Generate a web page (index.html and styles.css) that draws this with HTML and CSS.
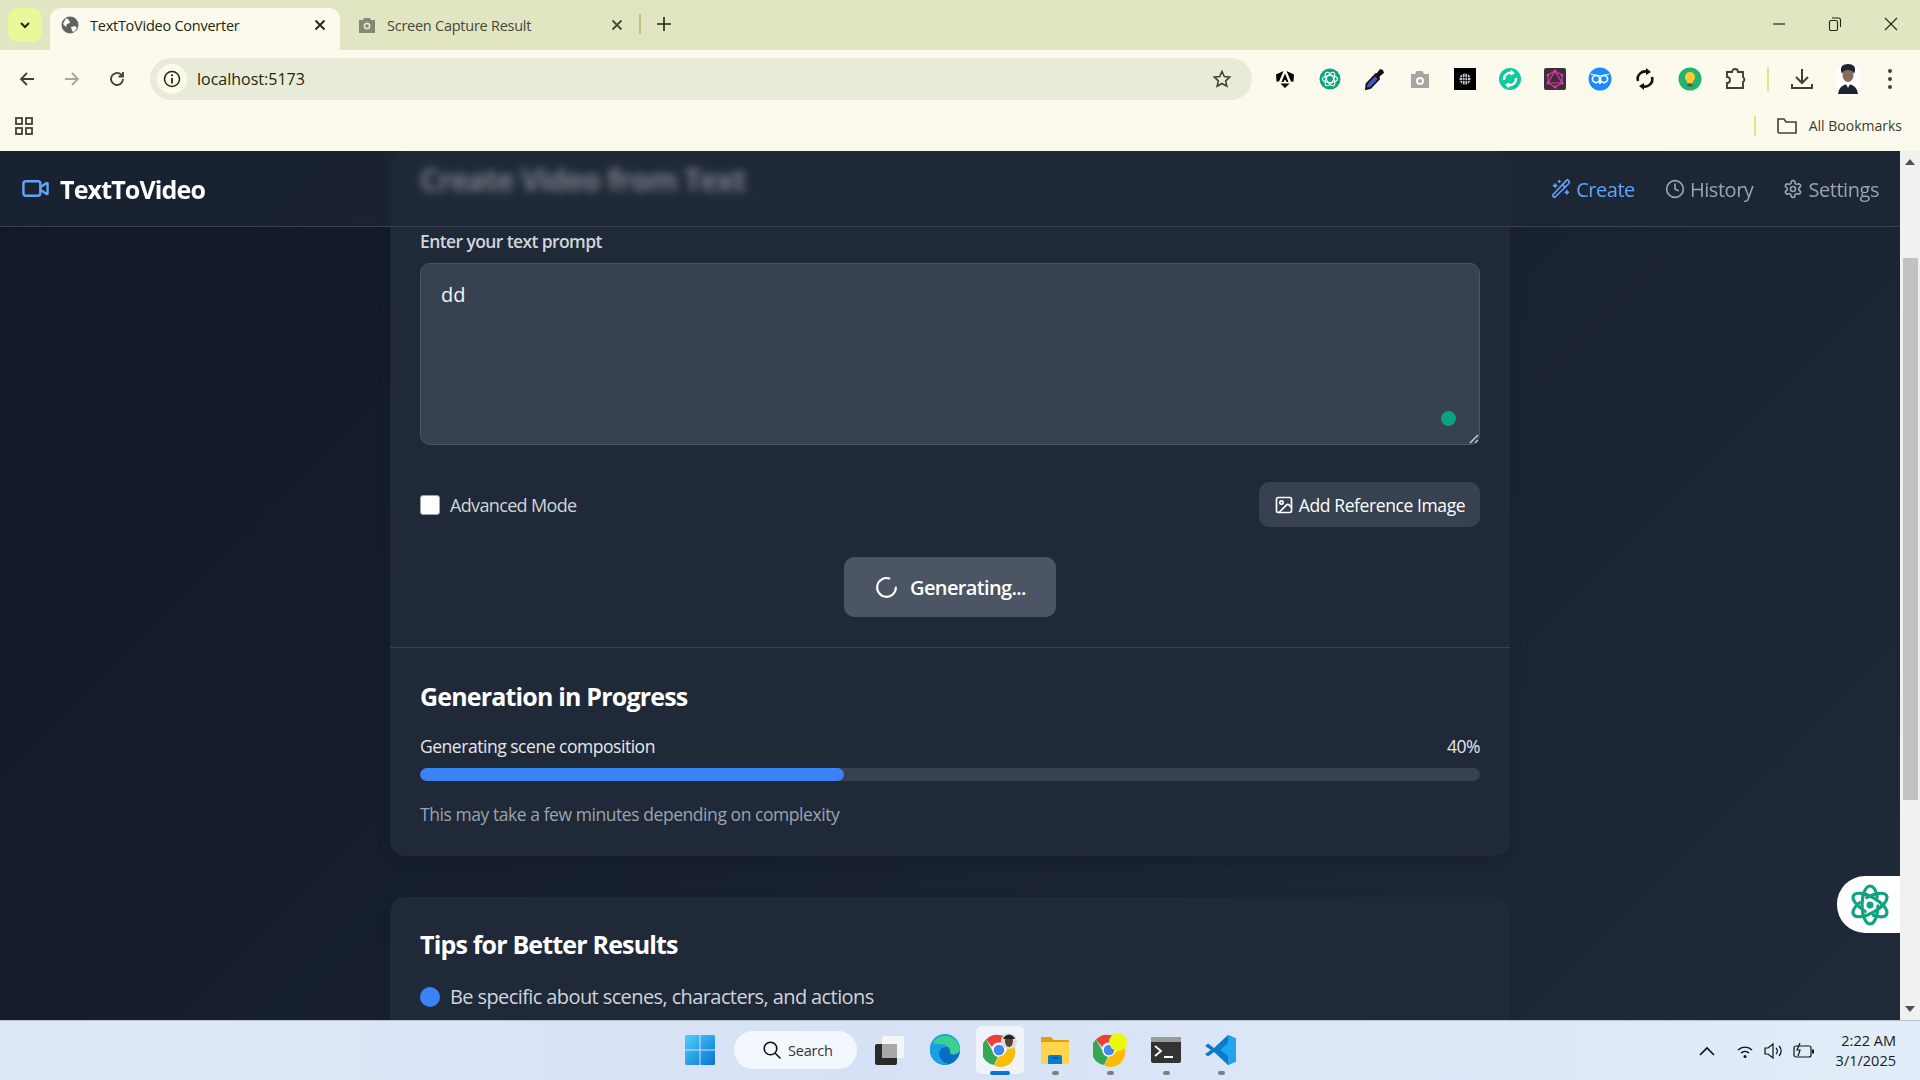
FILE: index.html
```html
<!DOCTYPE html>
<html lang="en">
<head>
<meta charset="utf-8">
<title>TextToVideo Converter</title>
<link rel="stylesheet" href="styles.css">
</head>
<body>
<div class="browser">
  <div class="tabstrip">
    <button class="tab-menu"><svg width="14" height="14" viewBox="0 0 14 14"><path d="M3 5l4 4 4-4" fill="none" stroke="#23260f" stroke-width="2"/></svg></button>
    <div class="tab tab-active">
      <svg class="fav" width="18" height="18" viewBox="0 0 18 18"><circle cx="9" cy="9" r="8.5" fill="#5f6368"/><path d="M5 2l3 2 1 3-3 1-1 3-3-3zM10 11l4-1 2 2-3 4-2-1z" fill="#fcfaec"/></svg>
      <span class="tab-title">TextToVideo Converter</span>
      <svg class="tab-x" width="14" height="14" viewBox="0 0 14 14"><path d="M2.500 2.500l9 9M11.500 2.500l-9 9" stroke="#23260f" stroke-width="1.800"/></svg>
    </div>
    <div class="tab tab-idle">
      <svg class="fav" width="18" height="16" viewBox="0 0 18 16"><path d="M1 3h4l1-2h6l1 2h4v13H1z" fill="#85877a"/><circle cx="9" cy="9" r="3.500" fill="#e1e5c1"/><circle cx="9" cy="9" r="1.800" fill="#85877a"/></svg>
      <span class="tab-title">Screen Capture Result</span>
      <svg class="tab-x" width="14" height="14" viewBox="0 0 14 14"><path d="M2.500 2.500l9 9M11.500 2.500l-9 9" stroke="#45483a" stroke-width="1.800"/></svg>
    </div>
    <span class="tab-sep"></span>
    <svg class="tab-plus" width="14" height="14" viewBox="0 0 14 14"><path d="M7 0v14M0 7h14" stroke="#23260f" stroke-width="1.600"/></svg>
    <div class="win-controls">
      <svg width="14" height="14" viewBox="0 0 14 14"><path d="M1 7h12" stroke="#23260f" stroke-width="1.200"/></svg>
      <svg width="14" height="14" viewBox="0 0 14 14"><rect x="1.500" y="3.500" width="8" height="10" rx="1.500" fill="none" stroke="#23260f" stroke-width="1.100"/><path d="M4 1h6.500a2 2 0 0 1 2 2v7" fill="none" stroke="#23260f" stroke-width="1.100"/></svg>
      <svg width="14" height="14" viewBox="0 0 14 14"><path d="M1 1l12 12M13 1L1 13" stroke="#23260f" stroke-width="1.100"/></svg>
    </div>
  </div>
  <div class="toolbar">
    <div class="nav-btns">
      <svg width="18" height="18" viewBox="0 0 18 18"><path d="M16 9H3M9 3L3 9l6 6" fill="none" stroke="#3f4232" stroke-width="1.800"/></svg>
      <svg width="18" height="18" viewBox="0 0 18 18"><path d="M2 9h13M9 3l6 6-6 6" fill="none" stroke="#a5a797" stroke-width="1.800"/></svg>
      <svg width="18" height="18" viewBox="0 0 18 18"><path d="M15 9a6 6 0 1 1-2-4.500L15 6.500M15 2v4.500h-4.500" fill="none" stroke="#3f4232" stroke-width="1.800"/></svg>
    </div>
    <div class="omnibox">
      <span class="info-chip"><svg width="18" height="18" viewBox="0 0 18 18"><circle cx="9" cy="9" r="7.500" fill="none" stroke="#23260f" stroke-width="1.500"/><path d="M9 8v5.500" stroke="#23260f" stroke-width="1.800"/><circle cx="9" cy="5.300" r="1.100" fill="#23260f"/></svg></span>
      <span class="url">localhost:5173</span>
      <svg class="star" width="20" height="20" viewBox="0 0 20 20"><path d="M10 2.500l2.300 5 5.400.6-4 3.700 1.100 5.400-4.800-2.700-4.800 2.700 1.100-5.400-4-3.700 5.400-.6z" fill="none" stroke="#3f4232" stroke-width="1.600"/></svg>
    </div>
    <div class="extensions">
      <svg width="24" height="24" viewBox="0 0 24 24"><path d="M10.500 4L6 14.500H3.500L3 7.500zM13.500 4L21 7.500l-.5 7H18zM12 6.500l3.500 8.500h-2l-.6-1.800h-1.800l-.6 1.800h-2zM7.500 16.500h9L12 21z" fill="#000"/></svg>
      <svg width="24" height="24" viewBox="0 0 24 24"><circle cx="12" cy="12" r="10.500" fill="#10a37f"/><g fill="none" stroke="#fff" stroke-width="1.100"><ellipse cx="12" cy="12" rx="7.500" ry="3.500"/><ellipse cx="12" cy="12" rx="7.500" ry="3.500" transform="rotate(60 12 12)"/><ellipse cx="12" cy="12" rx="7.500" ry="3.500" transform="rotate(120 12 12)"/></g></svg>
      <svg width="24" height="24" viewBox="0 0 24 24"><path d="M3 22l.5-5 8.500-9 4 4-8.500 9z" fill="#3c5ac8" stroke="#111" stroke-width="1.800"/><path d="M11.500 6.500l2.500-.5 3-4 3 1 1 3-4 3-.5 2.500z" fill="#111"/></svg>
      <svg width="24" height="24" viewBox="0 0 24 24"><path d="M3 7h4l1.500-3h6L16 7h5v14H3z" fill="#a5a5a5"/><circle cx="12" cy="14" r="4" fill="#fcfaec"/><circle cx="12" cy="14" r="2" fill="#a5a5a5"/></svg>
      <svg width="24" height="24" viewBox="0 0 24 24"><rect x="1" y="1" width="22" height="22" fill="#000"/><circle cx="12" cy="12" r="5.500" fill="#c8c8c8"/><path d="M12 6.500v11M9.500 7v10M14.500 7v10M6.500 10.500h11M6.500 13.500h11" stroke="#000" stroke-width=".8"/></svg>
      <svg width="24" height="24" viewBox="0 0 24 24"><circle cx="12" cy="12" r="11" fill="#10c99b"/><g fill="none" stroke="#fff" stroke-width="2.400"><path d="M6 13a6.500 6.500 0 0 1 8-7"/><path d="M18 11a6.500 6.500 0 0 1-8 7"/></g><path d="M13 2.500l4 4-4.500 2zM11 21.500l-4-4 4.500-2z" fill="#fff"/></svg>
      <svg width="24" height="24" viewBox="0 0 24 24"><rect x="1" y="1" width="22" height="22" rx="2" fill="#3a2f3a"/><g fill="none" stroke="#e535ab" stroke-width="1.200"><path d="M12 4l7 12H5z"/><path d="M12 4l7 4v8l-7 4-7-4V8z"/></g><g fill="#e535ab"><circle cx="12" cy="4" r="1.500"/><circle cx="19" cy="8" r="1.500"/><circle cx="19" cy="16" r="1.500"/><circle cx="12" cy="20" r="1.500"/><circle cx="5" cy="16" r="1.500"/><circle cx="5" cy="8" r="1.500"/></g></svg>
      <svg width="24" height="24" viewBox="0 0 24 24"><circle cx="12" cy="12" r="11.500" fill="#1a8cff"/><path d="M3 7l5 1.500h8L21 7" fill="none" stroke="#fff" stroke-width="1"/><circle cx="8" cy="12" r="3.600" fill="none" stroke="#fff" stroke-width="1.600"/><circle cx="16" cy="12" r="3.600" fill="none" stroke="#fff" stroke-width="1.600"/><path d="M11.500 12v5M12.500 12v5" stroke="#fff" stroke-width="1"/></svg>
      <svg width="24" height="24" viewBox="0 0 24 24"><g fill="none" stroke="#111" stroke-width="2.600"><path d="M5 14a7.500 7.500 0 0 1 10-9"/><path d="M19 10a7.500 7.500 0 0 1-10 9"/></g><path d="M13 1l5 4-5 3zM11 23l-5-4 5-3z" fill="#111"/></svg>
      <svg width="24" height="24" viewBox="0 0 24 24"><circle cx="12" cy="12" r="11.500" fill="#1fb56c"/><path d="M12 5a5 5 0 0 0-3 9v2h6v-2a5 5 0 0 0-3-9z" fill="#ffc933"/><rect x="9.500" y="17" width="5" height="2.500" fill="#555"/></svg>
      <svg width="24" height="24" viewBox="0 0 24 24"><path d="M4 5h5a3 3 0 0 1 6 0h5v5a3 3 0 0 1 0 5v6H4v-5a3 3 0 0 0 0-6z" fill="none" stroke="#3f4232" stroke-width="1.900"/></svg>
      <span class="tool-sep"></span>
      <svg width="24" height="24" viewBox="0 0 24 24"><path d="M12 2v14M6 10l6 6 6-6M2 17v4h20v-4" fill="none" stroke="#3f4232" stroke-width="2"/></svg>
      <svg width="26" height="32" viewBox="0 0 26 32"><ellipse cx="13" cy="16" rx="13" ry="16" fill="#fff"/><ellipse cx="13" cy="12" rx="5.500" ry="7" fill="#8a6a58"/><path d="M6 8Q5 1 13 1t7 7l-1 3q-1-4-6-4t-6 4z" fill="#1e2530"/><path d="M3 31q1-9 10-10 9 1 10 10z" fill="#1d2330"/><path d="M11 21l2 4 2-4z" fill="#fff"/></svg>
      <svg width="6" height="22" viewBox="0 0 6 22"><circle cx="3" cy="3" r="2" fill="#3f4232"/><circle cx="3" cy="11" r="2" fill="#3f4232"/><circle cx="3" cy="19" r="2" fill="#3f4232"/></svg>
    </div>
  </div>
  <div class="bookmarks">
    <svg width="18" height="18" viewBox="0 0 18 18"><g fill="none" stroke="#3f4232" stroke-width="1.800"><rect x="1" y="1" width="6" height="6"/><rect x="11" y="1" width="6" height="6"/><rect x="1" y="11" width="6" height="6"/><rect x="11" y="11" width="6" height="6"/></g></svg>
    <div class="bm-right">
      <span class="bm-sep"></span>
      <svg width="20" height="18" viewBox="0 0 20 18"><path d="M1 15V2h6l2 3h10v11H2z" fill="none" stroke="#3f4232" stroke-width="1.600"/></svg>
      <span class="bm-label">All Bookmarks</span>
    </div>
  </div>
</div>

<div class="viewport">
  <div class="page">
    <header class="app-header">
      <div class="brand">
        <svg width="29" height="29" viewBox="0 0 24 24" fill="none" stroke="#60a5fa" stroke-width="2" stroke-linecap="round" stroke-linejoin="round"><path d="m16 13 5.200 3.500a.5.5 0 0 0 .8-.4V7.900a.5.500 0 0 0-.8-.4L16 11"/><rect x="2" y="6" width="14" height="12" rx="2"/></svg>
        <span class="brand-name">TextToVideo</span>
      </div>
      <nav class="app-nav">
        <a class="nav-item nav-on"><svg width="20" height="20" viewBox="0 0 24 24" fill="none" stroke="currentColor" stroke-width="2" stroke-linecap="round" stroke-linejoin="round"><path d="m21.600 2.400-1-1a1.200 1.200 0 0 0-1.700 0L2.400 18.900a1.200 1.200 0 0 0 0 1.700l1 1a1.200 1.200 0 0 0 1.700 0L21.600 5.100a1.200 1.200 0 0 0 0-1.700z"/><path d="m14 7 3 3M5 6v4M19 14v4M10 2v2M7 8H3M21 16h-4M11 3H9"/></svg>Create</a>
        <a class="nav-item"><svg width="20" height="20" viewBox="0 0 24 24" fill="none" stroke="currentColor" stroke-width="2" stroke-linecap="round" stroke-linejoin="round"><circle cx="12" cy="12" r="10"/><path d="M12 6v6l4 2"/></svg>History</a>
        <a class="nav-item"><svg width="20" height="20" viewBox="0 0 24 24" fill="none" stroke="currentColor" stroke-width="2" stroke-linecap="round" stroke-linejoin="round"><path d="M12.220 2h-.44a2 2 0 0 0-2 2v.18a2 2 0 0 1-1 1.730l-.43.25a2 2 0 0 1-2 0l-.15-.08a2 2 0 0 0-2.730.73l-.22.38a2 2 0 0 0 .73 2.730l.15.1a2 2 0 0 1 1 1.720v.51a2 2 0 0 1-1 1.740l-.15.09a2 2 0 0 0-.73 2.730l.22.38a2 2 0 0 0 2.730.73l.15-.08a2 2 0 0 1 2 0l.43.25a2 2 0 0 1 1 1.730V20a2 2 0 0 0 2 2h.44a2 2 0 0 0 2-2v-.18a2 2 0 0 1 1-1.730l.43-.25a2 2 0 0 1 2 0l.15.08a2 2 0 0 0 2.730-.73l.22-.39a2 2 0 0 0-.73-2.730l-.15-.08a2 2 0 0 1-1-1.740v-.5a2 2 0 0 1 1-1.740l.15-.09a2 2 0 0 0 .73-2.730l-.22-.38a2 2 0 0 0-2.730-.73l-.15.08a2 2 0 0 1-2 0l-.43-.25a2 2 0 0 1-1-1.730V4a2 2 0 0 0-2-2z"/><circle cx="12" cy="12" r="3"/></svg>Settings</a>
      </nav>
    </header>

    <main class="content">
      <section class="card">
        <div class="form-block">
          <h1 class="page-title">Create Video from Text</h1>
          <label class="field-label">Enter your text prompt</label>
          <div class="textarea-wrap">
            <div class="textarea">dd</div>
            <span class="grammar-dot"></span>
            <svg class="grip" width="10" height="10" viewBox="0 0 10 10"><path d="M9 1L1 9M9 6L6 9" stroke="#d1d5db" stroke-width="1.300"/></svg>
          </div>
          <div class="options-row">
            <label class="check"><span class="checkbox"></span>Advanced Mode</label>
            <button class="ref-btn"><svg width="20" height="20" viewBox="0 0 24 24" fill="none" stroke="currentColor" stroke-width="2" stroke-linecap="round" stroke-linejoin="round"><rect x="3" y="3" width="18" height="18" rx="2"/><circle cx="9" cy="9" r="2"/><path d="m21 15-3.100-3.100a2 2 0 0 0-2.800 0L6 21"/></svg>Add Reference Image</button>
          </div>
          <div class="generate-row">
            <button class="gen-btn"><svg width="25" height="25" viewBox="0 0 24 24" fill="none" stroke="currentColor" stroke-width="2" stroke-linecap="round"><path d="M21 12a9 9 0 1 1-6.200-8.600"/></svg>Generating...</button>
          </div>
        </div>
        <div class="progress-block">
          <h2 class="section-title">Generation in Progress</h2>
          <div class="progress-head"><span>Generating scene composition</span><span>40%</span></div>
          <div class="track"><div class="fill" style="width:40%"></div></div>
          <p class="note">This may take a few minutes depending on complexity</p>
        </div>
      </section>
      <section class="card tips">
        <h2 class="section-title">Tips for Better Results</h2>
        <div class="tip"><span class="tip-dot"></span>Be specific about scenes, characters, and actions</div>
      </section>
    </main>

    <div class="float-tab"><svg width="42" height="42" viewBox="0 0 42 42"><g fill="none" stroke="#10a37f" stroke-width="3.200" stroke-linecap="round"><ellipse cx="21" cy="21" rx="19" ry="8" pathLength="100" stroke-dasharray="16 10 74 0" transform="rotate(30 21 21)"/><ellipse cx="21" cy="21" rx="19" ry="8" pathLength="100" stroke-dasharray="16 10 74 0" transform="rotate(150 21 21)"/><ellipse cx="21" cy="21" rx="19" ry="8" pathLength="100" stroke-dasharray="16 10 74 0" transform="rotate(270 21 21)"/></g><circle cx="21" cy="21" r="3.500" fill="#10a37f"/></svg></div>
  </div>
  <div class="scrollbar">
    <svg class="sb-arrow" width="12" height="8" viewBox="0 0 12 8"><path d="M6 1l5 6H1z" fill="#505050"/></svg>
    <div class="sb-thumb"></div>
    <svg class="sb-arrow sb-down" width="12" height="8" viewBox="0 0 12 8"><path d="M6 7l5-6H1z" fill="#505050"/></svg>
  </div>
</div>

<footer class="taskbar">
  <div class="task-center">
    <svg class="t-win" width="30" height="30" viewBox="0 0 30 30"><defs><linearGradient id="w" x1="0" y1="0" x2="1" y2="1"><stop offset="0" stop-color="#4fd0fb"/><stop offset="1" stop-color="#0673d4"/></linearGradient></defs><path d="M0 1.500A1.500 1.500 0 0 1 1.500 0h13v14.500H0zM15.500 0h13A1.500 1.500 0 0 1 30 1.500v13H15.500zM0 15.500h14.500V30h-13A1.500 1.500 0 0 1 0 28.500zM15.500 15.500H30v13a1.500 1.500 0 0 1-1.500 1.500h-13z" fill="url(#w)"/></svg>
    <div class="t-search"><svg width="20" height="20" viewBox="0 0 20 20"><circle cx="8.500" cy="8.500" r="6.300" fill="none" stroke="#111" stroke-width="1.600"/><path d="M13 13l5.500 5.500" stroke="#111" stroke-width="1.600"/></svg><span>Search</span></div>
    <span class="t-item"><svg width="32" height="32" viewBox="0 0 32 32"><rect x="1" y="10" width="22" height="21" rx="2" fill="#2a2a2a"/><rect x="8" y="2" width="22" height="22" rx="2" fill="#f5f5f5"/><rect x="8" y="10" width="15" height="14" fill="#a8a8a8"/></svg></span>
    <span class="t-item"><svg width="32" height="32" viewBox="0 0 32 32"><circle cx="16" cy="16" r="15" fill="#0b6cc4"/><path d="M1 16A15 15 0 0 1 31 14c0 6-7 8-10 5 2-2 1-6-4-6-7 0-9 8-4 13 1 2 5 4 8 4A15 15 0 0 1 1 16z" fill="#1aa0e0"/><path d="M4 8A15 15 0 0 1 31 15c0 5-7 7-10 4 1-5-3-9-9-9-3 0-6 1-8-2z" fill="#3ccf8e"/></svg></span>
    <span class="t-item t-active"><svg width="34" height="34" viewBox="0 0 34 34"><g transform="translate(0 2)"><path d="M16 0a15 15 0 0 1 13 7.500H16a7.500 7.500 0 0 0-7 4.500L3 4.500A15 15 0 0 1 16 0z" fill="#ea4335"/><path d="M3 4.500L9.500 16A7 7 0 0 0 15 22l-4 8A15 15 0 0 1 3 4.500z" fill="#34a853"/><path d="M29 7.500A15 15 0 0 1 11 30.500L17 20a7 7 0 0 0 5-12z" fill="#fbbc05"/><circle cx="16" cy="15" r="6.500" fill="#fff"/><circle cx="16" cy="15" r="5.300" fill="#4285f4"/></g><circle cx="26" cy="8" r="8" fill="#ddd"/><ellipse cx="26" cy="8" rx="4" ry="6" fill="#5c4033"/><path d="M20 5q6-7 12 0l-1 1H21z" fill="#222"/></svg></span>
    <span class="t-item"><svg width="32" height="32" viewBox="0 0 32 32"><path d="M2 4a1 1 0 0 1 1-1h9l3 3h14a1 1 0 0 1 1 1v4H2z" fill="#e0a00c"/><rect x="2" y="8" width="28" height="22" rx="1" fill="#ffd44f"/><path d="M9 30v-7a2 2 0 0 1 2-2h10a2 2 0 0 1 2 2v7z" fill="#0a7bd6"/><path d="M13 24h6" stroke="#054c8a" stroke-width="1.500"/></svg></span>
    <span class="t-item"><svg width="34" height="34" viewBox="0 0 34 34"><g transform="translate(0 2)"><path d="M16 0a15 15 0 0 1 13 7.500H16a7.500 7.500 0 0 0-7 4.500L3 4.500A15 15 0 0 1 16 0z" fill="#ea4335"/><path d="M3 4.500L9.500 16A7 7 0 0 0 15 22l-4 8A15 15 0 0 1 3 4.500z" fill="#34a853"/><path d="M29 7.500A15 15 0 0 1 11 30.500L17 20a7 7 0 0 0 5-12z" fill="#fbbc05"/><circle cx="16" cy="15" r="6.500" fill="#fff"/><circle cx="16" cy="15" r="5.300" fill="#4285f4"/></g><circle cx="25" cy="9" r="9" fill="#eef70f"/></svg></span>
    <span class="t-item"><svg width="30" height="26" viewBox="0 0 30 26"><rect width="30" height="26" rx="2" fill="#333"/><rect width="30" height="5" fill="#9a9a9a"/><path d="M4 9l6 5-6 5" fill="none" stroke="#fff" stroke-width="1.800"/><path d="M13 20h9" stroke="#fff" stroke-width="2"/></svg></span>
    <span class="t-item"><svg width="32" height="32" viewBox="0 0 32 32"><path d="M23 1l8 3.500v23L23 31 9 18l-6 4.500L0 20l6-4-6-4 3-2.500 6 4.500z" fill="#0a7acb"/><path d="M23 1l8 3.500v23L23 31V22l-8-6 8-7z" fill="#21a3f0"/></svg></span>
  </div>
  <div class="tray">
    <svg class="tray-chev" width="18" height="12" viewBox="0 0 18 12"><path d="M2 10l7-7 7 7" fill="none" stroke="#111" stroke-width="1.600"/></svg>
    <svg width="20" height="18" viewBox="0 0 20 18"><g fill="none" stroke="#111" stroke-width="1.400"><path d="M3 8a10 10 0 0 1 14 0M6 11a6 6 0 0 1 8 0"/></g><circle cx="10" cy="14.500" r="1.500" fill="#111"/></svg>
    <svg width="20" height="18" viewBox="0 0 20 18"><path d="M1 6h3l5-4v14l-5-4H1z" fill="none" stroke="#111" stroke-width="1.200"/><path d="M12 6a4 4 0 0 1 0 6M15 4a7 7 0 0 1 0 10" fill="none" stroke="#111" stroke-width="1.200"/></svg>
    <svg width="22" height="18" viewBox="0 0 22 18"><rect x="1" y="4" width="17" height="11" rx="2" fill="none" stroke="#111" stroke-width="1.200"/><rect x="19" y="7.500" width="2" height="4" fill="#111"/><path d="M7 1L4 8h3l-2 6" fill="none" stroke="#111" stroke-width="1.200"/></svg>
    <div class="clock"><span>2:22 AM</span><span>3/1/2025</span></div>
  </div>
</footer>
</body>
</html>
```

FILE: styles.css
```css
* { box-sizing: border-box; }
html, body { margin: 0; height: 100%; }
body {
  display: flex;
  flex-direction: column;
  height: 100vh;
  overflow: hidden;
  font-family: "Open Sans", "Noto Sans", "Liberation Sans", sans-serif;
}
button { font: inherit; border: 0; }
svg { flex: none; display: block; }

/* browser chrome */
.browser { flex: none; height: 151px; background: #fcfaec; color: #23260f; }
.tabstrip { height: 50px; background: #e1e5c1; display: flex; padding: 8px 0 0 8px; position: relative; }
.tab-menu { width: 34px; height: 34px; border-radius: 10px; background: #e9f99a; display: flex; align-items: center; justify-content: center; padding: 0; margin-right: 8px; }
.tab { height: 42px; display: flex; align-items: center; font-size: 14.500px; letter-spacing: -.25px; }
.tab-active { width: 290px; padding: 0 13px 8px 11px; background: #fcfaec; border-radius: 11px 11px 0 0; }
.tab-idle { width: 293px; padding: 0 9px 8px 18px; color: #45483a; }
.fav { margin-right: 11px; }
.tab-title { flex: 1; white-space: nowrap; }
.tab-sep { width: 2px; height: 20px; background: #bcc478; margin: 6px 0 0 6px; }
.tab-plus { margin: 9px 0 0 16px; }
.win-controls { margin-left: auto; display: flex; gap: 42px; padding: 9px 22px 0 0; }
.toolbar { height: 50px; display: flex; align-items: flex-start; padding-top: 8px; }
.nav-btns { width: 150px; height: 42px; display: flex; align-items: center; gap: 27px; padding-left: 18px; }
.omnibox { width: 1102px; height: 42px; background: #e9ebd9; border-radius: 21px; display: flex; align-items: center; padding: 0 20px 0 7px; }
.info-chip { width: 30px; height: 30px; border-radius: 50%; background: #fcfaec; display: flex; align-items: center; justify-content: center; }
.url { flex: 1; margin-left: 10px; font-size: 16px; }
.extensions { flex: 1; height: 42px; display: flex; align-items: center; gap: 21px; padding-left: 21px; }
.tool-sep { width: 2px; height: 24px; background: #dce78c; margin: 0 0 0 -1px; }
.extensions svg:last-child { margin-left: 5px; }
.bookmarks { height: 51px; display: flex; align-items: center; justify-content: space-between; padding: 0 18px 0 15px; }
.bm-right { display: flex; align-items: center; gap: 12px; font-size: 14px; }
.bm-sep { width: 2px; height: 20px; background: #dce78c; margin-right: 9px; }
.bm-label { color: #3a3c30; }

/* app viewport */
.viewport { flex: 1; min-height: 0; display: flex; }
.page {
  position: relative;
  flex: 1;
  min-width: 0;
  overflow: hidden;
  background: linear-gradient(135deg, #111827, #1f2937);
}
.app-header {
  position: absolute;
  inset: 0 0 auto 0;
  z-index: 5;
  height: 76px;
  padding: 0 21px;
  display: flex;
  align-items: center;
  justify-content: space-between;
  background: rgba(31, 41, 55, .62);
  backdrop-filter: blur(4px);
  border-bottom: 1px solid #374151;
}
.brand { display: flex; align-items: center; gap: 10px; }
.brand-name { font-size: 25px; font-weight: 700; color: #fff; letter-spacing: -.85px; }
.app-nav { display: flex; gap: 30px; padding-top: 1px; }
.nav-item { display: flex; align-items: center; gap: 5px; font-size: 20px; color: #9ca3af; letter-spacing: -.45px; }
.nav-on { color: #60a5fa; }

.content { width: 1120px; margin: 0 auto; display: flex; flex-direction: column; gap: 41px; }
.card { background: #1f2937; border-radius: 15px; box-shadow: 0 6px 14px rgba(0, 0, 0, .12); }
.form-block { padding: 11px 30px 30px; border-bottom: 1px solid #374151; }
.page-title { margin: 0 0 31px; font-size: 30px; line-height: 36px; font-weight: 700; color: #fff; letter-spacing: -.9px; }
.field-label { display: block; font-size: 17.500px; line-height: 25px; font-weight: 600; color: #d1d5db; margin-bottom: 9px; letter-spacing: -.6px; }
.textarea-wrap { position: relative; }
.textarea { height: 182px; background: #374151; border: 1px solid #4b5563; border-radius: 10px; padding: 17px 20px; font-size: 20px; line-height: 28px; color: #f3f4f6; }
.grammar-dot { position: absolute; right: 24px; bottom: 19px; width: 15px; height: 15px; border-radius: 50%; background: #0ba37f; }
.grip { position: absolute; right: 1px; bottom: 1px; }
.options-row { display: flex; align-items: center; justify-content: space-between; margin-top: 37px; }
.check { display: flex; align-items: center; gap: 10px; font-size: 18px; color: #d1d5db; letter-spacing: -.65px; }
.checkbox { width: 20px; height: 20px; background: #fff; border: 1px solid #9ca3af; border-radius: 3px; }
.ref-btn { height: 45px; width: 221px; display: flex; align-items: center; justify-content: center; gap: 5px; border-radius: 10px; background: #374151; color: #fff; font-size: 17.500px; letter-spacing: -.4px; font-weight: 500; padding: 0; }
.generate-row { display: flex; justify-content: center; margin-top: 30px; }
.gen-btn { width: 212px; height: 60px; display: flex; align-items: center; justify-content: center; gap: 11px; border-radius: 10px; background: #4b5563; color: #fff; font-size: 20px; font-weight: 600; letter-spacing: -.65px; padding: 0; }
.progress-block { padding: 31px 30px 29px; }
.section-title { margin: 0; font-size: 25px; line-height: 35px; font-weight: 700; color: #fff; letter-spacing: -.83px; }
.progress-head { display: flex; justify-content: space-between; margin-top: 20px; font-size: 17.500px; line-height: 25px; color: #e5e7eb; letter-spacing: -.47px; }
.track { height: 13px; margin-top: 9px; border-radius: 7px; background: #374151; overflow: hidden; }
.fill { height: 100%; border-radius: 7px; background: #3b82f6; }
.note { margin: 21px 0 0; font-size: 17.500px; line-height: 25px; color: #9ca3af; letter-spacing: -.44px; }
.tips { padding: 30px 30px; }
.tip { display: flex; align-items: center; gap: 10px; margin-top: 21px; font-size: 20px; line-height: 28px; color: #d1d5db; letter-spacing: -.6px; }
.tip-dot { width: 20px; height: 20px; border-radius: 50%; background: #3b82f6; }

.float-tab { position: absolute; right: 0; top: 725px; width: 63px; height: 57px; background: #fff; border-radius: 28px 0 0 28px; display: flex; align-items: center; padding-left: 12px; z-index: 6; }

.scrollbar { flex: none; width: 20px; background: #f1f1f1; display: flex; flex-direction: column; align-items: center; padding-top: 7px; }
.sb-thumb { width: 15px; height: 542px; margin-top: 92px; background: #c1c1c1; }
.sb-down { margin-top: auto; margin-bottom: 7px; }

/* taskbar */
.taskbar { flex: none; height: 60px; position: relative; display: flex; align-items: center; justify-content: flex-end; background: linear-gradient(90deg, #dde8f7, #d7e1f5 45%, #e1edf9); border-top: 1px solid #b8c2cc; }
.task-center { position: absolute; left: 685px; top: 0; height: 58px; display: flex; align-items: center; }
.t-win { margin-right: 19px; }
.t-search { width: 123px; height: 38px; border-radius: 19px; background: #f3f7fe; display: flex; align-items: center; gap: 6px; padding-left: 28px; font-size: 14.500px; letter-spacing: -.2px; color: #333; margin-right: 5px; }
.t-item { width: 48px; height: 48px; margin: 0 3.600px; display: flex; align-items: center; justify-content: center; border-radius: 5px; position: relative; }
.t-item::after { content: ""; position: absolute; left: 50%; bottom: -1px; width: 7px; height: 4px; margin-left: -3px; border-radius: 2px; background: #7c7f85; }
.t-item:nth-child(3)::after, .t-item:nth-child(4)::after { display: none; }
.t-active { background: #eef3fc; }
.t-active::after { width: 20px; margin-left: -10px; background: #0a74d6; }
.tray { display: flex; align-items: center; gap: 9px; padding-right: 24px; }
.tray-chev { margin-right: 10px; }
.clock { display: flex; flex-direction: column; align-items: flex-end; margin-left: 12px; font-size: 14.500px; line-height: 20px; color: #1a1a1a; }
```
